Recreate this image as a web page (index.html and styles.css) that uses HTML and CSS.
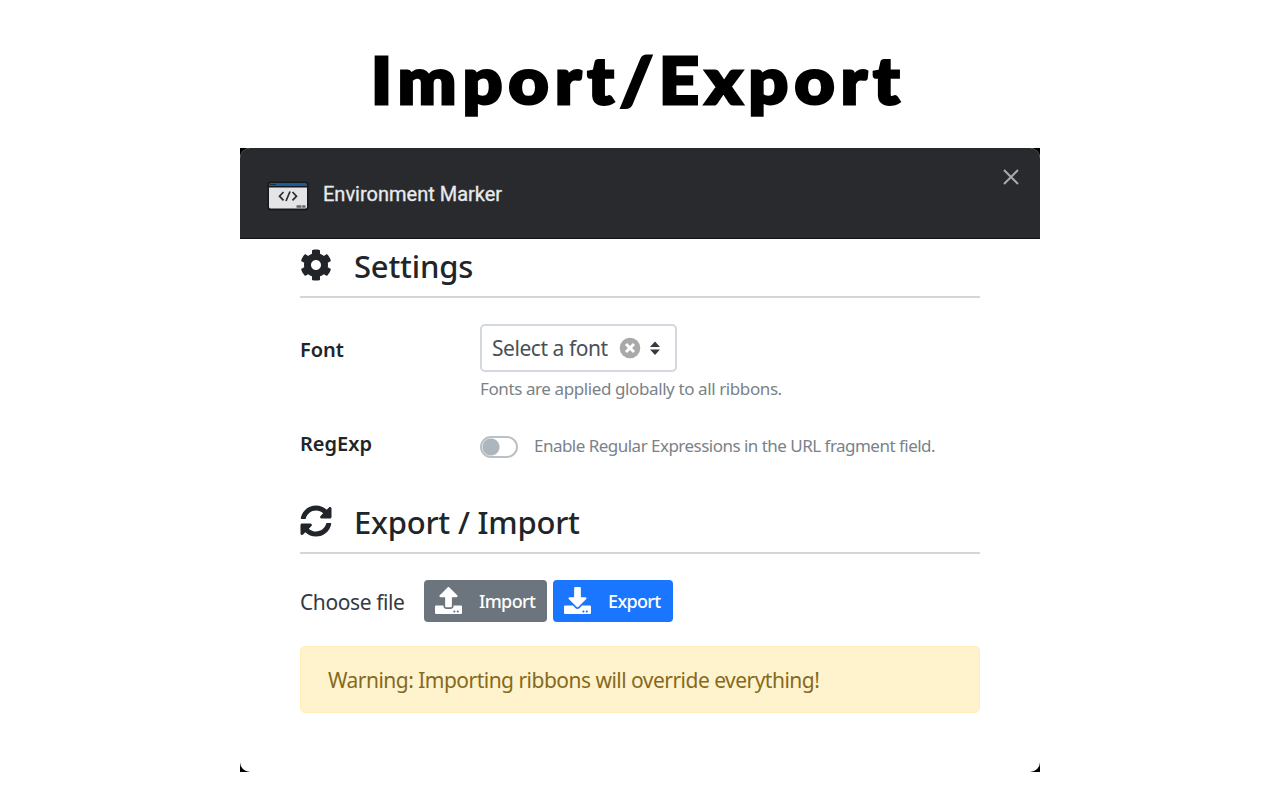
FILE: index.html
```html
<!DOCTYPE html>
<html lang="en">
<head>
<meta charset="utf-8">
<title>Environment Marker</title>
<link rel="stylesheet" href="styles.css">
</head>
<body>
<h1 class="title"><span class="title-text">Import/Export</span></h1>
<div class="frame">
<main class="window">
  <header class="bar">
    <svg class="logo" width="42" height="30" viewBox="0 0 42 30">
      <rect x=".5" y=".5" width="41" height="29" rx="3" fill="#17181a"/>
      <path d="M2 5V3.500Q2 2 3.500 2H38.500Q40 2 40 3.500V5Z" fill="#1b5c9e"/>
      <path d="M3 3.500h6" stroke="#12324f"/>
      <path d="M2 6.500H40V26Q40 27.500 38 27.500H4Q2 27.500 2 26Z" fill="#e4e4e6"/>
      <path d="M16.500 11l-4 4.200 4 4.200M25.500 11l4 4.200-4 4.200M23 10.500l-4 9.500" fill="none" stroke="#2b2c2e" stroke-width="1.700"/>
      <path d="M29.500 25.500h9" stroke="#666" stroke-width="2.500" stroke-dasharray="5 .7"/>
    </svg>
    <span class="name">Environment Marker</span>
    <svg class="close" width="16" height="16" viewBox="0 0 16 16"><path d="M1 1l14 14M15 1L1 15" stroke="#a5abae" stroke-width="2"/></svg>
  </header>
  <section class="content">
    <h2 class="heading">
      <svg width="32" height="32" viewBox="0 0 512 512"><path fill="#212529" d="M487.400 315.700l-42.600-24.600c4.300-23.200 4.300-47 0-70.200l42.600-24.600c4.900-2.800 7.100-8.600 5.500-14-11.100-35.600-30-67.800-54.700-94.600-3.800-4.100-10-5.100-14.800-2.300L380.800 110c-17.900-15.400-38.500-27.300-60.800-35.100V25.800c0-5.600-3.900-10.500-9.400-11.700-36.700-8.200-74.300-7.800-109.200 0-5.500 1.200-9.400 6.100-9.400 11.700V75c-22.200 7.900-42.800 19.800-60.800 35.100L88.700 85.500c-4.900-2.800-11-1.900-14.800 2.300-24.700 26.700-43.600 58.900-54.700 94.600-1.700 5.400.6 11.200 5.500 14L67.300 221c-4.300 23.200-4.300 47 0 70.200l-42.600 24.600c-4.900 2.800-7.100 8.600-5.500 14 11.100 35.600 30 67.800 54.700 94.600 3.800 4.100 10 5.100 14.800 2.300l42.600-24.600c17.900 15.400 38.500 27.300 60.800 35.100v49.200c0 5.600 3.900 10.500 9.400 11.700 36.700 8.200 74.300 7.800 109.200 0 5.500-1.200 9.400-6.100 9.400-11.700v-49.200c22.200-7.900 42.800-19.800 60.800-35.100l42.600 24.600c4.900 2.800 11 1.900 14.800-2.300 24.700-26.700 43.600-58.900 54.700-94.600 1.500-5.500-.7-11.300-5.600-14.100zM256 336c-44.100 0-80-35.900-80-80s35.900-80 80-80 80 35.900 80 80-35.900 80-80 80z"/></svg>
      <span class="heading-text">Settings</span>
    </h2>
    <div class="row row-font">
      <label class="label l-font">Font</label>
      <div>
        <div class="select">
          <span class="t-select">Select a font</span>
          <svg class="clear" width="22" height="22" viewBox="0 0 22 22"><circle cx="11" cy="11" r="10.300" fill="#a9a9a9"/><path d="M7 7l8 8M15 7l-8 8" stroke="#fff" stroke-width="3"/></svg>
          <svg class="caret" width="12" height="14" viewBox="0 0 12 14"><path d="M1 6L6 .5 11 6ZM1 8.500h10L6 14Z" fill="#343a40"/></svg>
        </div>
        <p class="hint t-hint">Fonts are applied globally to all ribbons.</p>
      </div>
    </div>
    <div class="row row-reg">
      <label class="label l-reg">RegExp</label>
      <span class="switch"></span>
      <span class="hint t-reg">Enable Regular Expressions in the URL fragment field.</span>
    </div>
    <h2 class="heading">
      <svg width="32" height="32" viewBox="0 0 512 512"><path fill="#212529" d="M370.720 133.280C339.458 104.008 298.888 87.962 255.848 88c-77.458.068-144.328 53.178-162.791 126.850-1.344 5.363-6.122 9.150-11.651 9.150H24.103c-7.498 0-13.194-6.807-11.807-14.176C33.933 94.924 134.813 8 256 8c66.448 0 126.791 26.136 171.315 68.685L463.030 40.970C478.149 25.851 504 36.559 504 57.941V192c0 13.255-10.745 24-24 24H345.941c-21.382 0-32.090-25.851-16.971-40.971l41.750-41.749zM32 296h134.059c21.382 0 32.090 25.851 16.971 40.971l-41.750 41.750c31.262 29.273 71.835 45.319 114.876 45.280 77.418-.070 144.315-53.144 162.787-126.849 1.344-5.363 6.122-9.150 11.651-9.150h57.304c7.498 0 13.194 6.807 11.807 14.176C478.067 417.076 377.187 504 256 504c-66.448 0-126.791-26.136-171.315-68.685L48.970 471.030C33.851 486.149 8 475.441 8 454.059V320c0-13.255 10.745-24 24-24z"/></svg>
      <span class="heading-text">Export / Import</span>
    </h2>
    <div class="actions">
      <span class="choose">Choose file</span>
      <button class="btn btn-import">
        <svg width="27" height="27" viewBox="0 0 512 512"><path fill="#fff" d="M296 384h-80c-13.300 0-24-10.700-24-24V192h-87.700c-17.800 0-26.700-21.500-14.100-34.100L242.300 5.700c7.500-7.500 19.800-7.500 27.300 0l152.200 152.200c12.600 12.600 3.700 34.100-14.100 34.100H320v168c0 13.300-10.700 24-24 24zm216-8v112c0 13.300-10.700 24-24 24H24c-13.300 0-24-10.700-24-24V376c0-13.300 10.700-24 24-24h136v8c0 30.900 25.100 56 56 56h80c30.900 0 56-25.100 56-56v-8h136c13.300 0 24 10.700 24 24zm-124 88c0-11-9-20-20-20s-20 9-20 20 9 20 20 20 20-9 20-20zm64 0c0-11-9-20-20-20s-20 9-20 20 9 20 20 20 20-9 20-20z"/></svg>
        <span>Import</span>
      </button>
      <button class="btn btn-export">
        <svg width="27" height="27" viewBox="0 0 512 512"><path fill="#fff" d="M216 0h80c13.300 0 24 10.700 24 24v168h87.700c17.800 0 26.700 21.500 14.100 34.100L269.700 378.300c-7.500 7.500-19.800 7.500-27.300 0L90.100 226.100c-12.600-12.600-3.700-34.100 14.100-34.100H192V24c0-13.300 10.700-24 24-24zm296 376v112c0 13.300-10.700 24-24 24H24c-13.300 0-24-10.700-24-24V376c0-13.300 10.700-24 24-24h146.700l49 49c20.100 20.100 52.500 20.100 72.600 0l49-49H488c13.300 0 24 10.700 24 24zm-124 88c0-11-9-20-20-20s-20 9-20 20 9 20 20 20 20-9 20-20zm64 0c0-11-9-20-20-20s-20 9-20 20 9 20 20 20 20-9 20-20z"/></svg>
        <span>Export</span>
      </button>
    </div>
    <div class="warning">Warning: Importing ribbons will override everything!</div>
  </section>
</main>
</div>
</body>
</html>
```
FILE: styles.css
```css
* { box-sizing: border-box; }
body { margin: 0; width: 1280px; height: 800px; overflow: hidden; background: #fff; color: #212529; font-family: "Noto Sans", sans-serif; }
h1, h2, p { margin: 0; }
svg { flex: none; display: block; }
span, label, p { white-space: nowrap; }
.title { height: 148px; padding: 39px 0 0 371px; font: 900 64px/82px Lato, sans-serif; letter-spacing: 5.8px; color: #000; }
.title-text { display: inline-block; transform: scaleX(1.085); transform-origin: left; -webkit-text-stroke: 3px #000; }
.frame { width: 800px; height: 624px; margin: 0 auto; background: #000; }
.window { width: 800px; height: 624px; border-radius: 10px; background: #fff; overflow: hidden; }
.bar { display: flex; height: 91px; padding: 0 21px 0 27px; background: #292a2e; border-bottom: 1px solid #111; }
.logo { margin-top: 33px; }
.name { margin: 33px 0 0 14px; font: 400 20px/27px Roboto, sans-serif; color: #e8eaed; -webkit-text-stroke: .3px #e8eaed; }
.close { margin: 21px 0 0 auto; }
.content { padding: 0 60px; }
.heading { display: flex; gap: 22px; height: 59px; padding-top: 10px; border-bottom: 2px solid #d5d6d7; font-size: 31px; line-height: 34px; font-weight: 500; letter-spacing: -.2px; }
.row { display: flex; }
.label { width: 180px; font-size: 20px; line-height: 26px; font-weight: 600; }
.row-font { height: 138px; padding-top: 26px; }
.l-font { padding-top: 13px; }
.select { display: flex; align-items: center; width: 197px; height: 48px; padding-left: 10px; border: 2px solid #d2d8de; border-radius: 5px; font-size: 21px; letter-spacing: -.45px; color: #495057; }
.t-select { width: 117px; }
.clear { margin-left: 10px; }
.caret { margin-left: 8px; }
.hint { font-size: 17px; line-height: 24px; letter-spacing: -.4px; color: #7a8288; }
.t-hint { margin-top: 5px; }
.row-reg { height: 59px; }
.l-reg { margin-top: -5px; }
.switch { width: 38px; height: 22px; border: 2px solid #b9c0c7; border-radius: 11px; background: radial-gradient(circle at 9px 9px, #adb5bd 8px, transparent 9px); }
.t-reg { margin: -2px 0 0 16px; letter-spacing: -.52px; }
.actions { display: flex; margin-top: 26px; height: 42px; }
.choose { width: 124px; font-size: 21px; line-height: 44px; letter-spacing: -.4px; color: #343a40; }
.btn { display: flex; align-items: center; height: 42px; padding: 0 0 0 11px; gap: 17px; border: 0; border-radius: 4px; color: #fff; font: 500 18px/24px "Noto Sans", sans-serif; letter-spacing: -.65px; }
.btn svg { margin-bottom: 2px; }
.btn-import { width: 123px; background: #6c757d; }
.btn-export { width: 120px; margin-left: 6px; background: #1a75ff; }
.warning { height: 67px; margin-top: 24px; padding-left: 27px; border: 1px solid #ffeeba; border-radius: 5px; background: #fff3cd; color: #856a1e; font-size: 21px; line-height: 67px; letter-spacing: -.52px; }
```
